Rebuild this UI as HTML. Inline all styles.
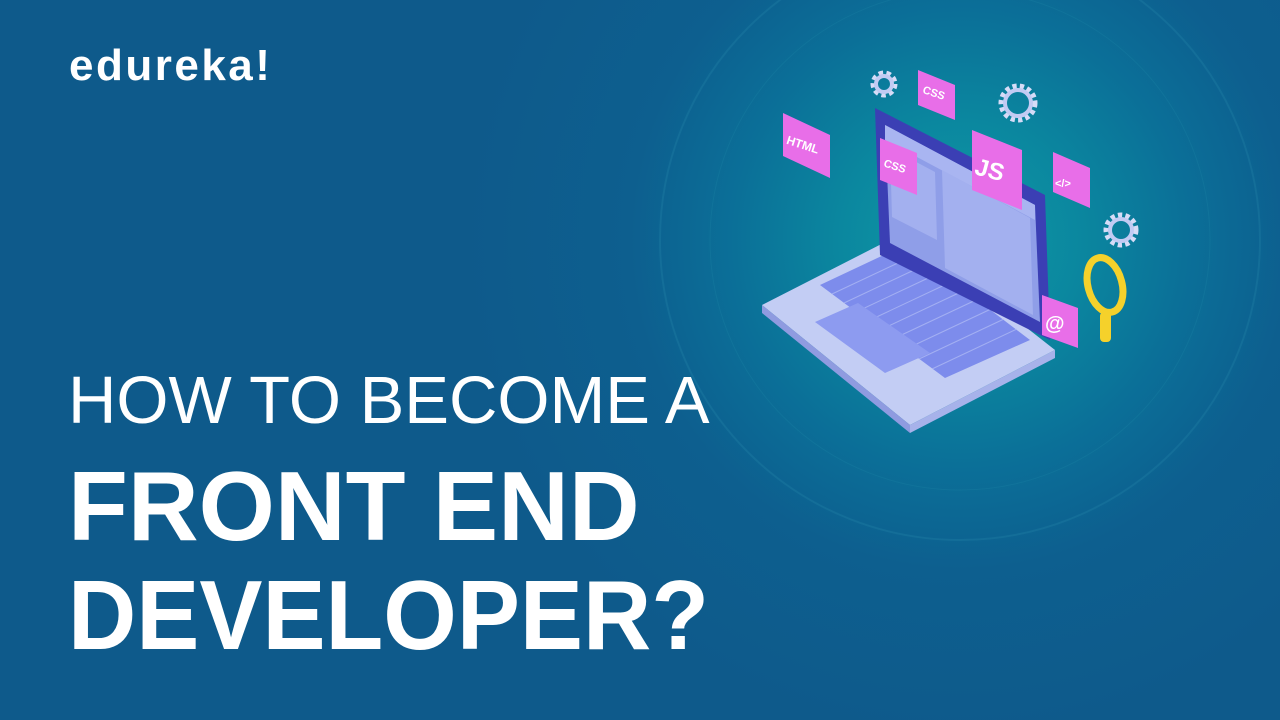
<!DOCTYPE html>
<html><head><meta charset="utf-8"><style>
html,body{margin:0;padding:0}
body{width:1280px;height:720px;overflow:hidden;position:relative;
background:radial-gradient(circle at 960px 240px,#0e9aa6 0px,#0b879f 120px,#0b6f98 230px,#0d5f8f 330px,#0e5a8b 500px);
font-family:"Liberation Sans",sans-serif;color:#fff}
.logo{position:absolute;left:69px;top:44px;font-family:"Liberation Sans",sans-serif;font-weight:bold;font-size:44px;letter-spacing:2.5px;line-height:1}
.t{position:absolute;left:68px;white-space:nowrap;line-height:1;transform-origin:0 0}
.l1{top:367px;font-size:67px}
.l2{top:457px;font-size:98px;font-weight:bold}
.l3{top:566px;font-size:98px;font-weight:bold;transform:scaleX(0.965)}
</style></head><body>
<svg width="1280" height="720" style="position:absolute;left:0;top:0">
<circle cx="960" cy="240" r="300" fill="none" stroke="#3aa9c0" stroke-opacity="0.15" stroke-width="2"/>
<circle cx="960" cy="240" r="250" fill="none" stroke="#3aa9c0" stroke-opacity="0.12" stroke-width="1"/>
<polygon points="762,305 905,232 1055,350 910,425" fill="#c3cdf4"/>
<polygon points="762,305 910,425 910,433 762,313" fill="#8f9be0"/>
<polygon points="910,425 1055,350 1055,358 910,433" fill="#a7b2ea"/>
<polygon points="820,285 905,245 1030,340 945,378" fill="#7d8cec"/>
<g stroke="#b4bff5" stroke-width="1" opacity="0.7">
<line x1="832" y1="294" x2="917" y2="254"/><line x1="844" y1="303" x2="929" y2="263"/><line x1="856" y1="312" x2="941" y2="272"/><line x1="868" y1="321" x2="953" y2="281"/><line x1="880" y1="330" x2="965" y2="290"/><line x1="893" y1="339" x2="978" y2="299"/><line x1="906" y1="349" x2="991" y2="309"/><line x1="919" y1="359" x2="1004" y2="319"/><line x1="932" y1="369" x2="1017" y2="329"/>
</g>
<polygon points="815,322 858,303 930,353 885,373" fill="#8d9bf0"/>
<polygon points="875,108 1045,195 1050,340 880,255" fill="#3b3fb4"/>
<polygon points="885,125 1035,205 1040,322 890,243" fill="#8f9ee8"/>
<polygon points="885,125 1035,205 1035,220 885,140" fill="#a9b5f1"/>
<polygon points="942,170 1030,218 1033,315 945,268" fill="#a3b0ef"/>
<polygon points="890,148 935,172 937,240 892,217" fill="#a3b0ef"/>
<g font-family="Liberation Sans" font-weight="bold" fill="#fff">
<polygon points="783,113 830,135 830,178 783,156" fill="#e86ee8"/><text x="786" y="148" font-size="12" transform="rotate(18 800 145)">HTML</text>
<polygon points="918,70 955,85 955,120 918,105" fill="#e86ee8"/><text x="922" y="97" font-size="11" transform="rotate(18 935 95)">CSS</text>
<polygon points="880,138 917,153 917,195 880,180" fill="#e86ee8"/><text x="883" y="170" font-size="11" transform="rotate(18 895 168)">CSS</text>
<polygon points="972,130 1022,150 1022,210 972,190" fill="#e86ee8"/><text x="975" y="178" font-size="24" transform="rotate(15 990 170)">JS</text>
<polygon points="1053,152 1090,168 1090,208 1053,192" fill="#e86ee8"/><text x="1055" y="187" font-size="11">&lt;/&gt;</text>
<polygon points="1042,295 1078,308 1078,348 1042,335" fill="#e86ee8"/><text x="1045" y="330" font-size="20">@</text>
</g>
<g fill="none" stroke="#d6dcf7" stroke-width="7" stroke-dasharray="4 3">
<circle cx="884" cy="84" r="10"/><circle cx="1018" cy="103" r="16"/><circle cx="1121" cy="230" r="14"/>
</g>
<g fill="none" stroke="#c2cbf3" stroke-width="4"><circle cx="884" cy="84" r="8"/><circle cx="1018" cy="103" r="13"/><circle cx="1121" cy="230" r="11"/></g>
<ellipse cx="1105" cy="285" rx="17" ry="28" fill="none" stroke="#f5d12b" stroke-width="7" transform="rotate(-15 1105 285)"/>
<rect x="1100" y="312" width="11" height="30" rx="4" fill="#f5d12b"/>
</svg>
<div class="logo">edureka!</div>
<div class="t l1">HOW TO BECOME A</div>
<div class="t l2">FRONT END</div>
<div class="t l3">DEVELOPER?</div>
</body></html>
